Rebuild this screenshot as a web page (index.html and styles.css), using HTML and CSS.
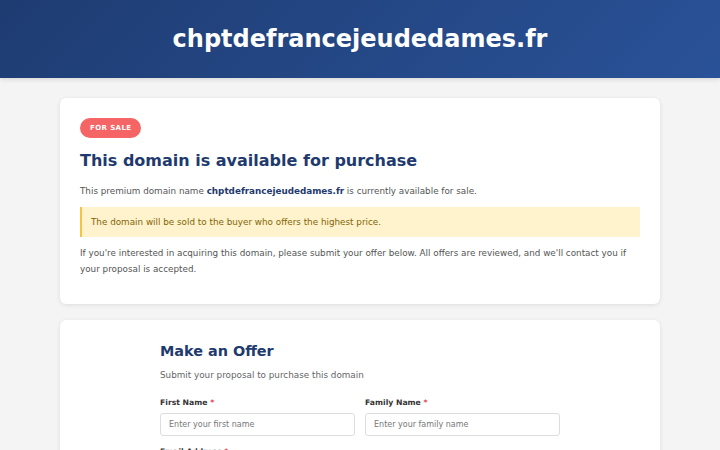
FILE: index.html
```html
<!DOCTYPE html>
<html lang="en">
<head>
<meta charset="utf-8">
<title>chptdefrancejeudedames.fr</title>
<link rel="stylesheet" href="styles.css">
</head>
<body>
<header class="site-header">
  <h1 class="site-title">chptdefrancejeudedames.fr</h1>
</header>
<main class="container">
  <section class="card">
    <div class="badge-row"><span class="badge">FOR SALE</span></div>
    <h2 class="card-title">This domain is available for purchase</h2>
    <p class="text">This premium domain name <strong class="domain">chptdefrancejeudedames.fr</strong> is currently available for sale.</p>
    <div class="notice">The domain will be sold to the buyer who offers the highest price.</div>
    <p class="text text-lines">If you're interested in acquiring this domain, please submit your offer below. All offers are reviewed, and we'll contact you if your proposal is accepted.</p>
  </section>
  <section class="card card-form">
    <div class="form-wrap">
      <h2 class="form-title">Make an Offer</h2>
      <p class="form-sub">Submit your proposal to purchase this domain</p>
      <div class="form-row">
        <div class="field">
          <label class="label">First Name <span class="req">*</span></label>
          <input class="input" type="text" placeholder="Enter your first name">
        </div>
        <div class="field">
          <label class="label">Family Name <span class="req">*</span></label>
          <input class="input" type="text" placeholder="Enter your family name">
        </div>
      </div>
      <div class="field">
        <label class="label">Email Address <span class="req">*</span></label>
        <input class="input" type="email" placeholder="Enter your email address">
      </div>
    </div>
  </section>
</main>
</body>
</html>
```
FILE: styles.css
```css
* { box-sizing: border-box; }
html, body { margin: 0; padding: 0; }
body {
  font-family: "DejaVu Sans", sans-serif;
  background: #f4f4f4;
  color: #444;
}
.site-header {
  height: 78px;
  background: linear-gradient(135deg, #1e3c72 0%, #2a5298 100%);
  display: flex;
  align-items: center;
  justify-content: center;
  box-shadow: 0 2px 4px rgba(0,0,0,0.1);
}
.site-title {
  margin: 0;
  color: #fff;
  font-size: 24px;
  font-weight: bold;
}
.container {
  max-width: 600px;
  margin: 20px auto 0;
  display: flex;
  flex-direction: column;
  gap: 16px;
}
.card {
  background: #fff;
  border-radius: 6px;
  box-shadow: 0 1px 4px rgba(0,0,0,0.1);
  padding: 20px 20px 27px;
}
.badge-row { display: flex; }
.badge {
  display: block;
  background: #f56565;
  color: #fff;
  font-size: 7px;
  font-weight: bold;
  letter-spacing: 0.4px;
  padding: 6px 10px;
  border-radius: 10px;
  line-height: 8px;
}
.card-title {
  margin: 13px 0 0;
  color: #1e3a6e;
  font-size: 16px;
  line-height: 20px;
}
.text {
  margin: 12px 0 0;
  font-size: 8.8px;
  line-height: 16px;
  color: #555;
}
.domain { color: #1e3a6e; }
.notice {
  margin-top: 8px;
  background: #fef3cd;
  border-left: 2px solid #f6c343;
  color: #856404;
  font-size: 8.8px;
  line-height: 16px;
  padding: 7px 9px;
}
.text-lines { margin-top: 8px; }
.card-form { padding: 20px 0 40px; }
.form-wrap {
  width: 400px;
  margin: 0 auto;
}
.form-title {
  margin: 0;
  color: #1e3a6e;
  font-size: 14.4px;
  line-height: 22px;
}
.form-sub {
  margin: 6px 0 0;
  font-size: 8.8px;
  line-height: 14px;
  color: #666;
}
.form-row {
  display: grid;
  grid-template-columns: 1fr 1fr;
  gap: 10px;
  margin-top: 15px;
}
.field { display: flex; flex-direction: column; margin-bottom: 10px; }
.label {
  font-size: 7.7px;
  line-height: 12px;
  font-weight: bold;
  color: #333;
  margin-bottom: 4px;
}
.req { color: #e53e3e; }
.input {
  height: 23px;
  border: 1px solid #ddd;
  border-radius: 3px;
  padding: 0 8px;
  font-family: "DejaVu Sans", sans-serif;
  font-size: 8px;
  color: #333;
}
.input::placeholder { color: #777; }
```
